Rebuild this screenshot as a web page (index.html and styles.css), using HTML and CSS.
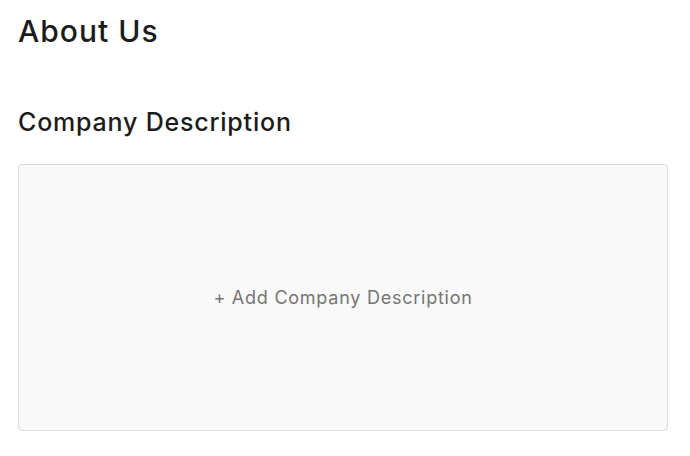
FILE: index.html
```html
<!DOCTYPE html>
<html lang="en">
<head>
  <meta charset="UTF-8" />
  <meta name="viewport" content="width=device-width, initial-scale=1.0"/>
  <title>About Us</title>
  <link rel="stylesheet" href="styles.css">
</head>
<body>
  <h1>About Us</h1>
  <section class="section">
    <h2>Company Description</h2>
    <div class="empty-box">
      <span class="add-link">+ Add Company Description</span>
    </div>
  </section>
</body>
</html>
```

FILE: styles.css
```css
body {
  font-family: 'Inter', sans-serif;
  background-color: #ffffff;
  margin: 0;
  padding: 13px 22px 0 18px;
  color: #1c1c1c;
}
h1 {
  font-size: 30px;
  font-weight: 500;
  letter-spacing: 1px;
  margin: 0;
  line-height: 36px;
}
.section {
  margin-top: 57px;
}
h2 {
  font-size: 25px;
  font-weight: 500;
  letter-spacing: 0.8px;
  margin: 0 0 26px 0;
  line-height: 32px;
}
.empty-box {
  height: 265px;
  background: #f9f9f9;
  border: 1px solid #dcdcdc;
  border-radius: 4px;
  display: flex;
  align-items: center;
  justify-content: center;
}
.add-link {
  font-size: 18px;
  letter-spacing: 0.75px;
  color: #757575;
  cursor: pointer;
}
```
